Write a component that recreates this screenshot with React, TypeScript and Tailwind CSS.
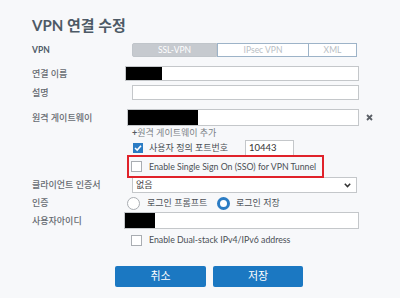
const font = { fontFamily: 'Lato, "Noto Sans CJK KR", "Noto Sans", sans-serif' };

function Label({ text }: { text: string }) {
  return <div className="w-[93px] shrink-0 text-[9px] font-medium text-[#666b71] whitespace-nowrap">{text}</div>;
}

function Checkbox({ checked }: { checked?: boolean }) {
  if (checked) {
    return (
      <div className="w-[10px] h-[10px] shrink-0 bg-[#2b7cc4] flex items-center justify-center">
        <svg width="8" height="8" viewBox="0 0 8 8">
          <path d="M1 4 L3.2 6 L7 1.8" stroke="white" strokeWidth="1.6" fill="none" />
        </svg>
      </div>
    );
  }
  return <div className="w-[11px] h-[11px] shrink-0 bg-white border border-[#a9adb2]" />;
}

export default function App() {
  return (
    <div className="w-[400px] h-[298px] bg-[#f7f8fa] pl-[32px] overflow-hidden text-[#4a4f55]" style={font}>
      <h1 className="pt-[16px] h-[36px] text-[15px] font-bold text-[#4d5a66] leading-[18px]">VPN 연결 수정</h1>

      {/* vpn type */}
      <div className="mt-[7px] flex items-center h-[14px]">
        <div className="w-[100px] text-[8.5px] font-bold text-[#4d5a66]">VPN</div>
        <div className="flex h-[14px] text-[8.5px] leading-[12px]">
          <div className="w-[85px] bg-[#c6cacf] border border-[#c0c5ca] rounded-l-[2px] text-white text-center">SSL-VPN</div>
          <div className="w-[92px] bg-white border border-[#9db3c8] text-[#b8bec4] text-center">IPsec VPN</div>
          <div className="w-[48px] bg-white border-y border-r border-[#9db3c8] text-[#b8bec4] text-center">XML</div>
        </div>
      </div>

      {/* name */}
      <div className="mt-[9px] flex items-center h-[15px]">
        <Label text="연결 이름" />
        <div className="w-[234px] h-[15px] bg-white border border-[#c4c7ca] flex">
          <div className="w-[36px] h-full bg-black" />
        </div>
      </div>

      {/* description */}
      <div className="mt-[4px] flex items-center h-[15px]">
        <Label text="설명" />
        <div className="ml-[7px] w-[227px] h-[15px] bg-white border border-[#c4c7ca]" />
      </div>

      {/* gateway */}
      <div className="mt-[9px] flex items-center h-[17px]">
        <Label text="원격 게이트웨이" />
        <div className="ml-[2px] w-[232px] h-[17px] bg-white border border-[#c4c7ca] flex">
          <div className="w-[70px] h-full bg-black" />
        </div>
        <svg className="ml-[7px]" width="7" height="7" viewBox="0 0 7 7">
          <path d="M1 1 L6 6 M6 1 L1 6" stroke="#5a5f66" strokeWidth="1.8" />
        </svg>
      </div>

      <div className="ml-[100px] mt-[1px] h-[12px] text-[9px] leading-[12px] text-[#7a7f85] whitespace-nowrap">
        <span className="text-[#555a60] font-bold">+</span>원격 게이트웨이 추가
      </div>

      {/* port */}
      <div className="ml-[101px] mt-[1px] flex items-center h-[16px]">
        <Checkbox checked />
        <span className="ml-[6px] w-[96px] text-[9px] text-[#4a4f55] whitespace-nowrap">사용자 정의 포트번호</span>
        <div className="w-[49px] h-[16px] bg-white border border-[#c4c7ca] text-[9.5px] leading-[14px] pl-[3px] text-[#333]">10443</div>
      </div>

      {/* sso */}
      <div className="relative ml-[95px] -mt-[1px] w-[197px] h-[23px] border-2 border-[#e0222a] flex items-center pl-[2px]">
        <Checkbox />
        <span className="ml-[7px] text-[8.75px] text-[#4a4f55] whitespace-nowrap">Enable Single Sign On (SSO) for VPN Tunnel</span>
      </div>

      {/* certificate */}
      <div className="-mt-[1px] flex items-center h-[16px]">
        <Label text="클라이언트 인증서" />
        <div className="ml-[7px] w-[225px] h-[16px] bg-white border border-[#c4c7ca] flex items-center justify-between pl-[3px] pr-[5px]">
          <span className="text-[9px] text-[#444]">없음</span>
          <svg width="7" height="5" viewBox="0 0 7 5">
            <path d="M0.8 0.8 L3.5 3.6 L6.2 0.8" stroke="#333" strokeWidth="1.5" fill="none" />
          </svg>
        </div>
      </div>

      {/* auth */}
      <div className="mt-[3px] flex items-center h-[14px]">
        <Label text="인증" />
        <div className="ml-[2px] w-[13px] h-[13px] shrink-0 rounded-full bg-white border border-[#a9adb2]" />
        <span className="ml-[7px] w-[70px] text-[9px] text-[#4a4f55] whitespace-nowrap">로그인 프롬프트</span>
        <div className="w-[13px] h-[13px] shrink-0 rounded-full border-[3.5px] border-[#2b7cc4] bg-white" />
        <span className="ml-[6px] text-[9px] text-[#4a4f55] whitespace-nowrap">로그인 저장</span>
      </div>

      {/* user id */}
      <div className="mt-[2px] flex items-center h-[17px]">
        <Label text="사용자아이디" />
        <div className="-ml-[1px] w-[235px] h-[17px] bg-white border border-[#c4c7ca] flex">
          <div className="w-[30px] h-full bg-black" />
        </div>
      </div>

      {/* dual stack */}
      <div className="ml-[99px] mt-[5px] flex items-center h-[12px]">
        <Checkbox />
        <span className="ml-[7px] text-[8.75px] text-[#4a4f55] whitespace-nowrap">Enable Dual-stack IPv4/IPv6 address</span>
      </div>

      {/* actions */}
      <div className="ml-[83px] mt-[20px] flex gap-[7px]">
        <button className="w-[91px] h-[21px] rounded-[2px] bg-[#1b78c2] text-white text-[11px]">취소</button>
        <button className="w-[90px] h-[21px] rounded-[2px] bg-[#1b78c2] text-white text-[11px]">저장</button>
      </div>
    </div>
  );
}
